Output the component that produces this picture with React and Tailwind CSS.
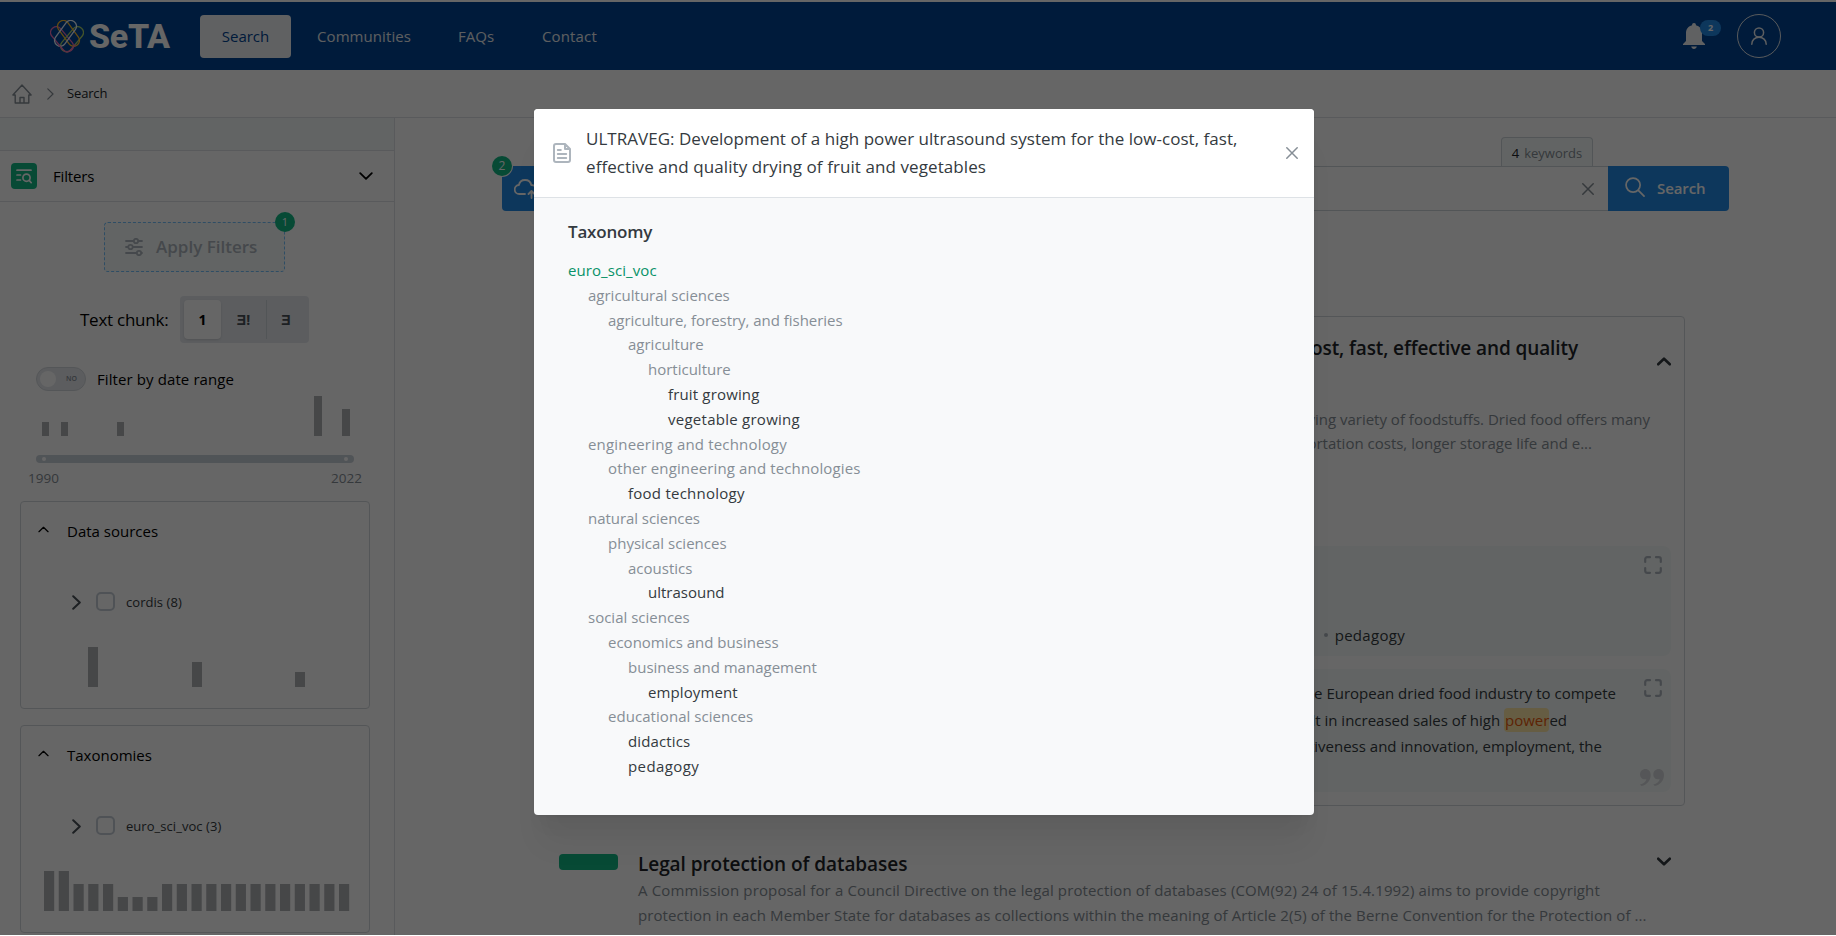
import React from "react";

const Stroke = ({ className, children, w = 2, box = "0 0 24 24" }) => (
  <svg viewBox={box} className={className} fill="none" stroke="currentColor" strokeWidth={w} strokeLinecap="round" strokeLinejoin="round">
    {children}
  </svg>
);

const ChevronUp = ({ className, w = 2 }) => (
  <Stroke className={className} w={w} box="0 0 14 8"><path d="M1.2 6.8 7 1.2l5.8 5.6" /></Stroke>
);
const ChevronDown = ({ className, w = 2 }) => (
  <Stroke className={className} w={w} box="0 0 14 8"><path d="M1.2 1.2 7 6.8l5.8-5.6" /></Stroke>
);
const ChevronRight = ({ className, w = 2 }) => (
  <Stroke className={className} w={w} box="0 0 9 15"><path d="M1.2 1.2 7.8 7.5l-6.6 6.3" /></Stroke>
);
const Cross = ({ className, w = 1.5 }) => (
  <Stroke className={className} w={w} box="0 0 12 12"><path d="M.8.8 11.2 11.2M11.2.8.8 11.2" /></Stroke>
);
const Expand = ({ className }) => (
  <Stroke className={className} w={2.2} box="0 0 18 18">
    <path d="M1.2 6V3.2a2 2 0 0 1 2-2H6M12 1.2h2.8a2 2 0 0 1 2 2V6M16.8 12v2.8a2 2 0 0 1-2 2H12M6 16.8H3.2a2 2 0 0 1-2-2V12" />
  </Stroke>
);

const Logo = () => (
  <svg viewBox="0 0 34 33" className="h-[33px] w-[34px]" fill="none" strokeWidth="1.3">
    <rect x="6.200" y="4.700" width="11.500" height="29" rx="5.500" transform="rotate(-40 12 19.200)" stroke="#e86bb0" />
    <rect x="16.300" y="4.700" width="11.500" height="29" rx="5.500" transform="rotate(40 22 19.200)" stroke="#a9d26a" />
    <rect x="12.700" y="-1.200" width="11.500" height="29" rx="5.500" transform="rotate(-36 18.500 13.300)" stroke="#f5b82e" />
    <rect x="9.800" y="-1.200" width="11.500" height="29" rx="5.500" transform="rotate(36 15.500 13.300)" stroke="#e8f1fb" />
    <path d="m8.500 24.500 5 5.800a4.700 4.700 0 0 0 7 0l5-5.800" stroke="#e86bb0" />
  </svg>
);

const Header = () => (
  <header className="flex h-[68px] items-center bg-[#004494] pl-[50px] pr-[55px]">
    <Logo />
    <span className="ml-[5px] w-[82px] whitespace-nowrap font-[Roboto] text-[34px] leading-[40px] font-extrabold tracking-[-0.3px] text-white">SeTA</span>
    <nav className="flex items-center text-[15px] text-[#e9ecef]">
      <a className="ml-[29px] flex h-[43px] w-[91px] items-center justify-center rounded bg-[#f1f3f5] text-[#004494]">Search</a>
      <a className="ml-[26px] w-[93px] tracking-[0.08px]">Communities</a>
      <a className="ml-[48px] w-[36px]">FAQs</a>
      <a className="ml-[48px] tracking-[0.15px]">Contact</a>
    </nav>
    <div className="ml-auto flex items-center">
      <div className="relative h-[26px] w-[22px] text-[#f1f3f5]">
        <svg viewBox="0 0 22 26" className="h-[26px] w-[22px]" fill="currentColor">
          <path d="M11 0a1.900 1.900 0 0 1 1.900 2.200C16.600 3 19 6.200 19 10v8l3 3v1H0v-1l3-3v-8c0-3.800 2.400-7 6.100-7.800A1.900 1.900 0 0 1 11 0ZM8.200 23.500h5.600c-.3 1.500-1.400 2.500-2.800 2.500s-2.500-1-2.800-2.500Z" />
        </svg>
        <span className="absolute -top-[3px] left-[17px] flex h-4 w-[21px] items-center justify-center rounded-full bg-[#228be6] text-[9px] font-bold text-white">2</span>
      </div>
      <div className="ml-[32px] flex size-11 items-center justify-center rounded-full border border-[#dee2e6] text-[#e9ecef]">
        <Stroke className="h-[18px] w-4" w={1.5} box="0 0 16 18"><circle cx="8" cy="5.500" r="4.600" /><path d="M.8 17.200C.8 13 4 10.300 8 10.300s7.200 2.700 7.200 6.900" /></Stroke>
      </div>
    </div>
  </header>
);

const Breadcrumb = () => (
  <div className="flex h-[48px] items-center border-b border-[#dee2e6] pl-3">
    <Stroke className="h-5 w-5 text-[#868e96]" w={1.4} box="0 0 20 20">
      <path d="M3.200 11H.9L10 1l9.100 10h-2.300M3.200 11v8h13.600v-8M8 19v-5.500h4V19" />
    </Stroke>
    <Stroke className="ml-[15px] h-3 w-[7px] text-[#868e96]" w={1.2} box="0 0 7 12"><path d="M.8.8 6 6 .8 11.200" /></Stroke>
    <span className="ml-[13px] text-[13px] tracking-[-0.15px] text-[#212529]">Search</span>
  </div>
);

const dateBars = [
  [42, 7, 14], [61, 7, 14], [117, 7, 14], [314, 8, 40], [342, 8, 27],
];
const sourceBars = [[88, 10, 40], [192, 10, 25], [295, 10, 15]];
const taxBars = [40, 40, 27, 27, 27, 14, 14, 14, 27, 27, 27, 27, 27, 27, 27, 27, 27, 27, 27, 27, 27];

const Bars = ({ data, left, width }) => (
  <svg viewBox={`${left} 0 ${width} 40`} style={{ width, height: 40 }} className="block text-[#aeb1b5]" fill="currentColor">
    {data.map(([x, w, h]) => <rect key={x} x={x} y={40 - h} width={w} height={h} />)}
  </svg>
);

const FacetCard = ({ title, label, children, className }) => (
  <section className={`mx-5 h-[208px] w-[350px] rounded border border-[#d3d8dd] ${className}`}>
    <div className="flex h-[58px] items-center pl-[17px]">
      <ChevronUp className="-mt-[3px] h-[7px] w-[11px] text-black" w={1.6} />
      <h3 className="ml-[18px] text-[15px] leading-5 text-black">{title}</h3>
    </div>
    <div className="mt-[28px] flex h-[28px] items-center pl-[51px]">
      <ChevronRight className="h-[15px] w-[9px] text-[#495057]" />
      <span className="-mt-[2px] ml-[15px] size-[19px] rounded-[5px] border-2 border-[#c5ced6]" />
      <span className="ml-[11px] pt-[2px] text-[13px] tracking-[0.05px] text-[#343a40]">{label}</span>
    </div>
    <div className="mt-[31px] pl-[23px]">{children}</div>
  </section>
);

const Sidebar = () => (
  <aside className="h-[817px] w-[395px] shrink-0 overflow-hidden border-r border-[#dee2e6]">
    <div className="h-[33px] border-b border-[#dee2e6] bg-[#f5fbf9]" />
    <div className="flex h-[51px] items-center border-b border-[#dee2e6] pl-[11px] pr-[21px]">
      <span className="flex size-[26px] items-center justify-center rounded bg-[#12b886] text-white">
        <Stroke className="h-[15px] w-4" w={1.7} box="0 0 16 15">
          <path d="M1 1.200h14M1 6h3.500M1 11h3.500" /><circle cx="10.500" cy="8.700" r="3.600" /><path d="m13.200 11.400 2 2.300" />
        </Stroke>
      </span>
      <span className="ml-4 text-[15px] tracking-[-0.15px] text-black">Filters</span>
      <ChevronDown className="ml-auto h-2 w-[14px] text-black" w={1.8} />
    </div>

    <div className="relative ml-[104px] mt-5 flex h-[50px] w-[181px] items-center rounded border border-dashed border-[#74c0fc] bg-[#f5fbf9] pl-5 text-[#adb5bd]">
      <Stroke className="h-[18px] w-[18px]" w={1.8} box="0 0 18 18">
        <path d="M1 3h7.500M13.500 3H17M1 9h2M8 9h9M1 15h10.500M16.500 15h.5" /><circle cx="11" cy="3" r="2.200" /><circle cx="5.500" cy="9" r="2.200" /><circle cx="14" cy="15" r="2.200" />
      </Stroke>
      <span className="ml-[13px] text-[17px] font-semibold">Apply Filters</span>
      <span className="absolute -right-[11px] -top-[11px] flex size-5 items-center justify-center rounded-full bg-[#12b886] text-[11px] text-white">1</span>
    </div>

    <div className="mt-6 flex h-[47px] items-center pl-20">
      <span className="w-[100px] whitespace-nowrap text-[17px] tracking-[-0.25px] text-black">Text chunk:</span>
      <div className="flex h-[47px] w-[129px] items-center rounded bg-[#e6e9ee] p-1 text-[14px] font-bold text-[#495057]">
        <span className="flex h-[39px] w-[37px] items-center justify-center rounded bg-white text-black shadow">1</span>
        <span className="flex h-[39px] w-[46px] items-center justify-center border-r border-[#ced4da]">Ǝ!</span>
        <span className="flex h-[39px] w-[38px] items-center justify-center">Ǝ</span>
      </div>
    </div>

    <div className="mt-6 flex h-6 items-center pl-9">
      <span className="flex h-6 w-[50px] items-center rounded-full border border-[#d3d8dd] bg-[#e6e9ee] pl-[3px]">
        <span className="size-4 rounded-full bg-white" />
        <span className="ml-[10px] text-[7px] font-semibold text-[#868e96]">NO</span>
      </span>
      <span className="ml-[11px] text-[15px] tracking-[0.1px] text-black">Filter by date range</span>
    </div>
    <div className="mt-[5px] pl-9"><Bars data={dateBars} left={36} width={318} /></div>
    <div className="ml-9 mt-[19px] flex h-2 w-[318px] items-center justify-between rounded-full bg-[#c9d1d9] px-1.5">
      <span className="size-1 rounded-full bg-white" /><span className="size-1 rounded-full bg-white" />
    </div>
    <div className="ml-[28px] mt-[5px] flex h-[21px] w-[334px] justify-between text-[13.500px] leading-5 text-[#868e96]"><span>1990</span><span>2022</span></div>

    <FacetCard title="Data sources" label="cordis (8)" className="mt-[12px]">
      <Bars data={sourceBars} left={44} width={306} />
    </FacetCard>
    <FacetCard title="Taxonomies" label="euro_sci_voc (3)" className="mt-4">
      <Bars data={taxBars.map((h, i) => [44 + i * 14.75, 10.2, h])} left={44} width={306} />
    </FacetCard>
  </aside>
);

const SearchBar = () => (
  <div className="ml-[107px] w-[1227px] pt-[19px]">
    <div className="flex h-[29px] justify-end pr-[136px]">
      <div className="flex w-[92px] items-center justify-center gap-[5px] rounded-t border border-b-0 border-[#ced4da] bg-[#f5fbf9] pt-[3px] text-[13px] text-[#868e96]"><span className="text-[#212529]">4</span>keywords</div>
    </div>
    <div className="flex h-[45px]">
      <div className="relative flex w-[70px] items-center rounded-l bg-[#228be6] pl-3 text-white">
        <Stroke className="h-5 w-6" w={1.8} box="0 0 24 20">
          <path d="M11 15H5.500a4.500 4.500 0 0 1-.6-9C5.500 3 8 1 11 1c3.200 0 5.700 2 6.300 5 3 .2 5.200 2.300 5.200 4.800M17.500 19v-7m-3 3 3-3 3 3" />
        </Stroke>
        <span className="absolute -left-[10px] -top-[10px] flex size-5 items-center justify-center rounded-full bg-[#12b886] text-[12px] ring-1 ring-white">2</span>
      </div>
      <div className="flex flex-1 items-center justify-end border-y border-[#ced4da] pr-[14px] text-[#868e96]"><Cross className="h-3 w-3" /></div>
      <button className="flex w-[121px] items-center rounded-r bg-[#228be6] pl-[17px] text-[15px] font-semibold text-white">
        <Stroke className="-mt-[3px] h-5 w-5" w={1.8} box="0 0 21 21"><circle cx="8.500" cy="8.500" r="7.400" /><path d="m14 14 6 6" /></Stroke>
        <span className="ml-3 tracking-[-0.1px]">Search</span>
      </button>
    </div>
  </div>
);

const Results = () => (
  <div className="ml-[148px] w-[1142px]">
    <article className="mt-[105px] h-[490px] rounded border border-[#d3d8dd] px-[13px]">
      <div className="flex h-[90px] justify-end">
        <h2 className="mt-[17px] whitespace-nowrap text-[19px] leading-[28px] font-semibold tracking-[-0.1px] text-[#212529]">low-cost, fast, effective and quality</h2>
        <ChevronUp className="ml-[79px] mt-[40px] h-[9px] w-[14px] text-[#343a40]" w={2.6} />
      </div>
      <div className="h-[139px] text-right text-[15px] leading-[24px] text-[#868e96]">
        <p className="pr-[21px]">drying variety of foodstuffs. Dried food offers many</p>
        <p className="pr-[79px]">transportation costs, longer storage life and e...</p>
      </div>
      <div className="flex h-[110px] justify-end rounded-lg bg-[#f5fbf9] pr-[9px] pt-[10px] text-[#343a40]">
        <span className="mt-[69px] flex h-5 items-center gap-[7px] text-[15px] tracking-[0.3px]"><i className="size-1 rounded-full bg-[#adb5bd]" />pedagogy</span>
        <Expand className="ml-[239px] size-[18px] text-[#adb5bd]" />
      </div>
      <div className="relative mt-[13px] flex h-[123px] justify-end rounded-lg bg-[#f5fbf9] pr-[9px] pt-[10px] text-[#343a40]">
        <div className="mt-[1px] text-right text-[15px] leading-[26.500px]">
          <p className="pr-[28px]">the European dried food industry to compete</p>
          <p className="pr-[77px]">result in increased sales of high <mark className="rounded bg-[#ffe8a8] py-0.5 pl-px text-[#e8590c]">power</mark>ed</p>
          <p className="pr-[42px]">competitiveness and innovation, employment, the</p>
        </div>
        <Expand className="size-[18px] text-[#adb5bd]" />
        <svg viewBox="0 0 24 17" className="absolute bottom-[6px] right-[7px] h-[17px] w-6 text-[#d5d8dc]" fill="currentColor">
          <path d="M5.300 0c3.300 0 5.400 2.400 5.400 6 0 5.500-4 10-9.200 11L0 15.500c3.500-.8 5.800-2.800 6.400-5.300C2.900 11 0 8.800 0 5.400 0 2.400 2.400 0 5.300 0ZM18.600 0C21.900 0 24 2.400 24 6c0 5.500-4 10-9.200 11l-1.500-1.500c3.500-.8 5.800-2.800 6.400-5.300-3.500.8-6.400-1.400-6.400-4.800 0-3 2.400-5.400 5.300-5.400Z" />
        </svg>
      </div>
    </article>

    <article className="mt-[44px] flex pl-4">
      <span className="mt-[4px] h-4 w-[59px] rounded bg-[#12b886]" />
      <div className="ml-[20px] w-[1019px] whitespace-nowrap">
        <h2 className="text-[19px] leading-[28px] font-semibold tracking-[-0.06px] text-[#212529]">Legal protection of databases</h2>
        <p className="text-[15px] leading-[25px] tracking-[0.135px] text-[#868e96]">A Commission proposal for a Council Directive on the legal protection of databases (COM(92) 24 of 15.4.1992) aims to provide copyright</p>
        <p className="text-[15px] leading-[25px] tracking-[0.085px] text-[#868e96]">protection in each Member State for databases as collections within the meaning of Article 2(5) of the Berne Convention for the Protection of ...</p>
      </div>
      <ChevronDown className="mt-[7px] h-[9px] w-[14px] text-[#343a40]" w={2.600} />
    </article>
  </div>
);

const taxonomy = [
  ["euro_sci_voc", "tracking-[0.08px] text-[#099268]"],
  ["agricultural sciences", "pl-5 text-[#868e96]"],
  ["agriculture, forestry, and fisheries", "pl-10 tracking-[-0.03px] text-[#868e96]"],
  ["agriculture", "pl-15 text-[#868e96]"],
  ["horticulture", "pl-20 text-[#868e96]"],
  ["fruit growing", "pl-25 tracking-[0.16px] text-[#343a40]"],
  ["vegetable growing", "pl-25 tracking-[0.26px] text-[#343a40]"],
  ["engineering and technology", "pl-5 tracking-[0.18px] text-[#868e96]"],
  ["other engineering and technologies", "pl-10 tracking-[0.13px] text-[#868e96]"],
  ["food technology", "pl-15 tracking-[0.25px] text-[#343a40]"],
  ["natural sciences", "pl-5 tracking-[-0.05px] text-[#868e96]"],
  ["physical sciences", "pl-10 text-[#868e96]"],
  ["acoustics", "pl-15 text-[#868e96]"],
  ["ultrasound", "pl-20 text-[#343a40]"],
  ["social sciences", "pl-5 text-[#868e96]"],
  ["economics and business", "pl-10 text-[#868e96]"],
  ["business and management", "pl-15 text-[#868e96]"],
  ["employment", "pl-20 tracking-[0.1px] text-[#343a40]"],
  ["educational sciences", "pl-10 tracking-[0.05px] text-[#868e96]"],
  ["didactics", "pl-15 tracking-[0.12px] text-[#343a40]"],
  ["pedagogy", "pl-15 tracking-[0.4px] text-[#343a40]"],
];

const Modal = () => (
  <div className="absolute inset-x-0 top-0 flex h-[935px] items-start bg-black/60 pl-[534px] pt-[109px]">
    <div role="dialog" className="flex h-[706px] w-[780px] flex-col overflow-hidden rounded bg-[#f8f9fa] shadow-[0_1px_3px_rgba(0,0,0,0.05),0_36px_28px_-7px_rgba(0,0,0,0.05),0_17px_17px_-7px_rgba(0,0,0,0.04)]">
      <div className="flex h-[89px] items-center border-b border-[#dee2e6] bg-white pl-[19px] pr-4">
        <Stroke className="h-5 w-[18px] text-[#adb5bd]" w={2} box="0 0 18 20">
          <path d="M12 1H3a2 2 0 0 0-2 2v14a2 2 0 0 0 2 2h12a2 2 0 0 0 2-2V6l-5-5v5h5M4.800 7h3M4.800 11h8.400M4.800 15h8.400" />
        </Stroke>
        <h1 className="ml-[15px] w-[690px] text-[17px] leading-[28px] tracking-[0.03px] text-[#343a40]">
          ULTRAVEG: Development of a high power ultrasound system for the low-cost, fast,<br /><span className="tracking-[0.08px]">effective and quality drying of fruit and vegetables</span>
        </h1>
        <Cross className="ml-auto h-3 w-3 text-[#868e96]" />
      </div>
      <div className="px-[34px] pt-5">
        <h2 className="text-[17px] leading-[28px] font-semibold tracking-[-0.2px] text-[#343a40]">Taxonomy</h2>
        <ul className="mt-3 text-[15px] leading-[24.800px]">
          {taxonomy.map(([name, cls]) => <li key={name} className={cls}>{name}</li>)}
        </ul>
      </div>
    </div>
  </div>
);

export default function App() {
  return (
    <div className="relative h-[936px] w-[1836px] overflow-hidden bg-white pt-0.5 font-['Open_Sans',sans-serif]">
      <Header />
      <Breadcrumb />
      <div className="flex">
        <Sidebar />
        <main className="flex-1"><SearchBar /><Results /></main>
      </div>
      <Modal />
    </div>
  );
}
